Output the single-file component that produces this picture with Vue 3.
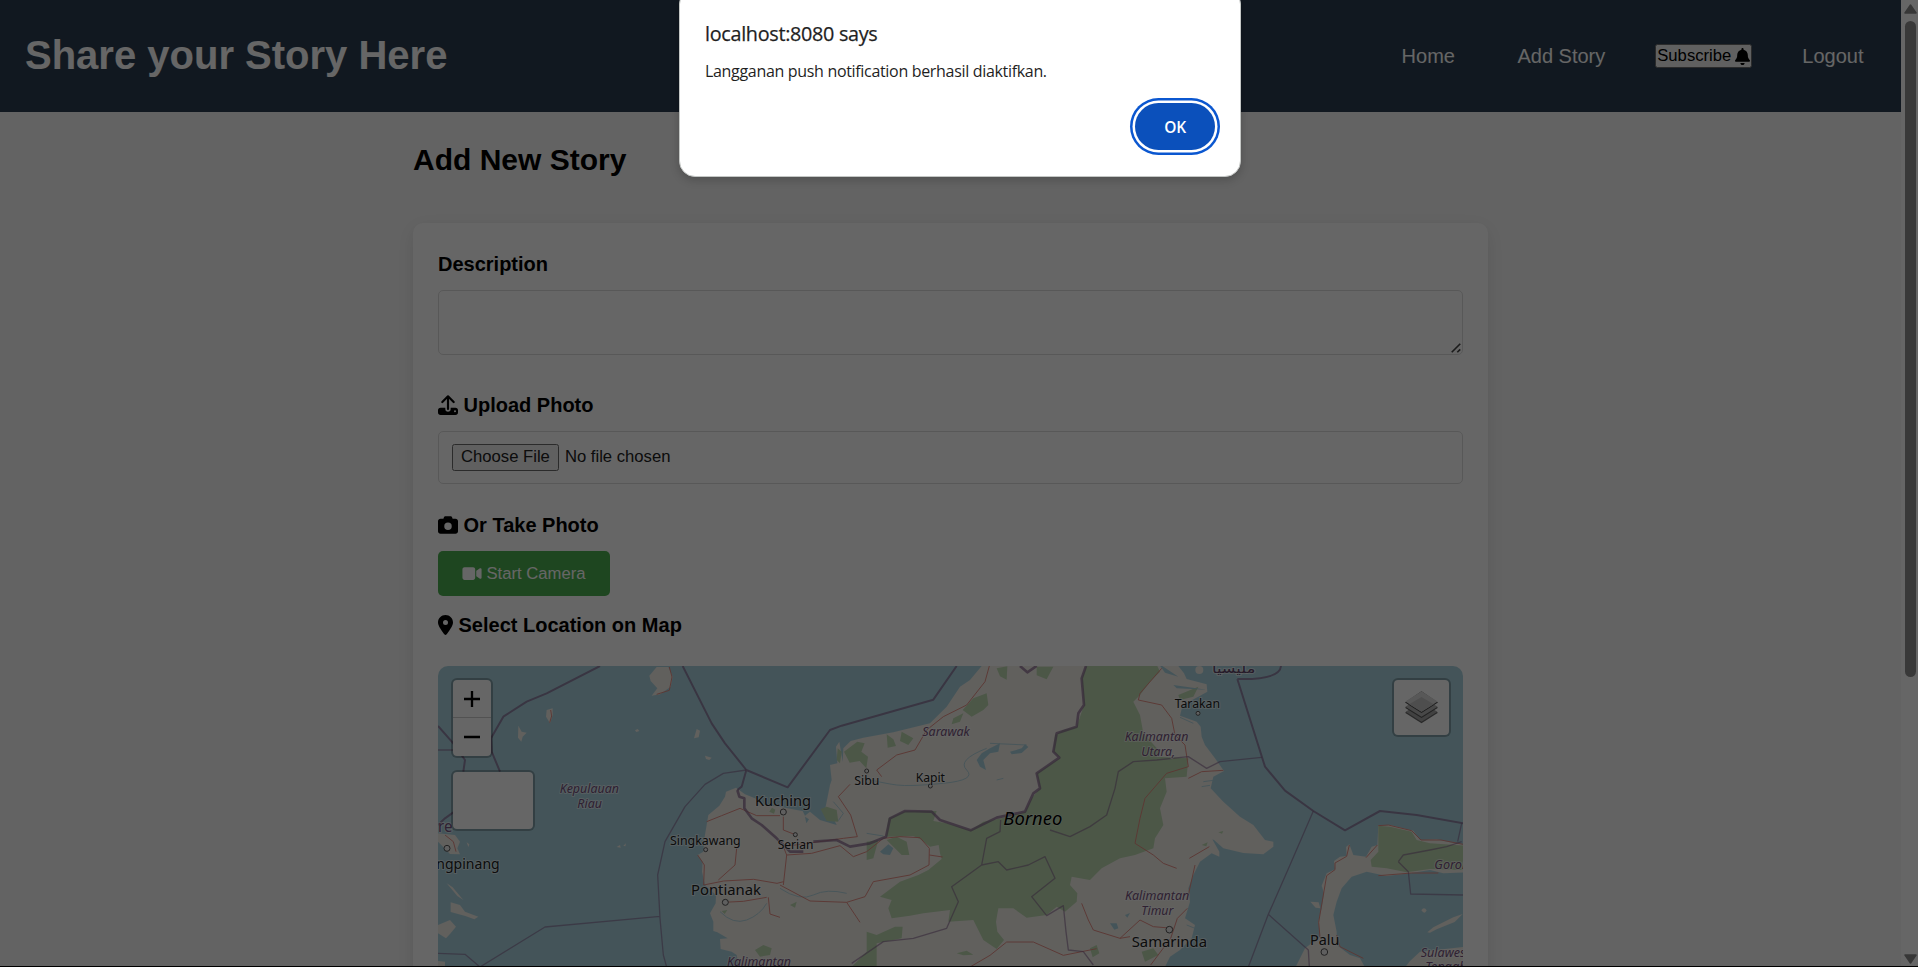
<script setup>
const towns = [
  { name: 'Singkawang', x: 720, y: 569, w: 212, size: 37, cx: 827, cy: 584, r: 6 },
  { name: 'Pontianak', x: 783, y: 721, w: 210, size: 44, cx: 886, cy: 742, r: 9 },
  { name: 'Kuching', x: 975, y: 452, w: 168, size: 44, cx: 1060, cy: 471, r: 9 },
  { name: 'Serian', x: 1043, y: 582, w: 107, size: 37, cx: 1096, cy: 539, r: 6 },
  { name: 'Sibu', x: 1273, y: 391, w: 75, size: 37, cx: 1310, cy: 348, r: 6 },
  { name: 'Kapit', x: 1457, y: 380, w: 88, size: 37, cx: 1501, cy: 393, r: 6 },
  { name: 'Tarakan', x: 2234, y: 159, w: 136, size: 37, cx: 2304, cy: 175, r: 6 },
  { name: 'Samarinda', x: 2105, y: 875, w: 226, size: 44, cx: 2218, cy: 824, r: 10 },
  { name: 'Palu', x: 2640, y: 871, w: 88, size: 44, cx: 2683, cy: 891, r: 10 },
  { name: 'ngpinang', x: 19, y: 642, w: 190, size: 44, cx: 51, cy: 580, r: 9 }
]
const regions = [
  { name: 'Kepulauan', x: 389, y: 413, w: 178 },
  { name: 'Riau', x: 442, y: 458, w: 74 },
  { name: 'Sarawak', x: 1477, y: 242, w: 142 },
  { name: 'Kalimantan', x: 2084, y: 257, w: 191 },
  { name: 'Utara,', x: 2134, y: 302, w: 101 },
  { name: 'Kalimantan', x: 2085, y: 736, w: 193 },
  { name: 'Timur', x: 2134, y: 780, w: 96 },
  { name: 'Kalimantan', x: 891, y: 932, w: 192 },
  { name: 'Gorontalo', x: 3013, y: 641, w: 170 },
  { name: 'Sulawesi', x: 2972, y: 906, w: 144 },
  { name: 'Tengah', x: 2986, y: 948, w: 124 }
]
</script>

<template>
  <div class="screen">
    <header class="topbar">
      <h1>Share your Story Here</h1>
      <nav>
        <a>Home</a>
        <a>Add Story</a>
        <button class="subscribe">Subscribe
          <svg viewBox="0 0 448 512"><path d="M224 0c-17.7 0-32 14.3-32 32V51.2C119 66 64 130.6 64 208v18.8c0 47-17.3 92.4-48.5 127.6l-7.4 8.3c-8.4 9.4-10.4 22.9-5.3 34.4S19.4 416 32 416H416c12.6 0 24-7.4 29.2-18.9s3.1-25-5.3-34.4l-7.4-8.3C401.3 319.2 384 273.9 384 226.8V208c0-77.4-55-142-128-156.8V32c0-17.7-14.3-32-32-32zm45.3 493.3c12-12 18.7-28.3 18.7-45.3H160c0 17 6.7 33.3 18.7 45.3s28.3 18.7 45.3 18.7s33.3-6.7 45.3-18.7z" /></svg>
        </button>
        <a>Logout</a>
      </nav>
    </header>

    <main>
      <h2>Add New Story</h2>
      <section class="card">
        <div class="label">Description</div>
        <div class="textarea">
          <svg viewBox="0 0 27 27"><path d="M2 25 25 2M17 25l8-8" fill="none" stroke="#444" stroke-width="4.5" /></svg>
        </div>

        <div class="label">
          <svg class="ic20" viewBox="0 0 60 60">
            <path d="M30 6V42M13 21 30 4 47 21" fill="none" stroke="#000" stroke-width="6.5" stroke-linecap="round" stroke-linejoin="round" />
            <path fill-rule="evenodd" d="M8 38H22V42a8 8 0 0 0 16 0V38H52a8 8 0 0 1 8 8V52a8 8 0 0 1-8 8H8a8 8 0 0 1-8-8V46a8 8 0 0 1 8-8ZM51 46a3 3 0 1 0 0 6a3 3 0 1 0 0-6Z" />
          </svg>
          Upload Photo
        </div>
        <div class="file"><span class="choose">Choose File</span><span>No file chosen</span></div>

        <div class="label">
          <svg class="ic20" viewBox="0 0 512 512"><path d="M149.1 64.8L138.7 96H64C28.7 96 0 124.7 0 160V416c0 35.3 28.7 64 64 64H448c35.3 0 64-28.7 64-64V160c0-35.3-28.7-64-64-64H373.3L362.9 64.8C356.4 45.2 338.1 32 317.4 32H194.6c-20.7 0-39 13.2-45.5 32.8zM256 192a96 96 0 1 1 0 192 96 96 0 1 1 0-192z" /></svg>
          Or Take Photo
        </div>
        <button class="camera">
          <svg viewBox="0 0 576 512"><path d="M0 128C0 92.7 28.7 64 64 64H320c35.3 0 64 28.7 64 64V384c0 35.3-28.7 64-64 64H64c-35.3 0-64-28.7-64-64V128zM559.1 99.8c10.4 5.6 16.9 16.4 16.9 28.2V384c0 11.8-6.5 22.6-16.9 28.2s-23 5-32.9-1.6l-96-64L416 337.1V174.9l14.2-9.5 96-64c9.8-6.5 22.4-7.2 32.9-1.6z" /></svg>
          Start Camera
        </button>

        <div class="label place">
          <svg class="pin" viewBox="0 0 384 512"><path d="M215.7 499.2C267 435 384 279.4 384 192C384 86 298 0 192 0S0 86 0 192c0 87.4 117 243 168.3 307.2c12.3 15.3 35.1 15.3 47.4 0zM192 128a64 64 0 1 1 0 128 64 64 0 1 1 0-128z" /></svg>
          Select Location on Map
        </div>

        <div class="map">
          <svg class="tiles" viewBox="24 33 3075 903" preserveAspectRatio="none">
            <!-- land masses -->
            <g class="land">
              <path d="M930 950 920 900 905 890 872 882 870 852 893 850 862 832 850 828 850 800 840 775 857 745 858 720 825 690 816 650 818 620 803 600 820 590 824 545 835 480 868 452 885 425 888 410 918 398 945 418 975 430 1000 450 1050 455 1100 465 1118 468 1125 482 1140 470 1170 495 1220 510 1205 480 1186 460 1200 390 1205 375 1200 330 1222 325 1218 275 1228 260 1238 320 1240 280 1262 258 1300 248 1390 232 1500 205 1550 155 1590 95 1620 75 1655 33H2245L2262 55 2270 72 2330 88 2332 110 2305 125 2258 150 2250 182 2300 200 2312 215 2315 245 2325 270 2355 310 2382 348 2350 365 2342 400 2380 440 2430 485 2470 510 2505 555 2530 560 2530 575 2500 598 2440 594 2380 580 2352 555 2347 553 2368 590 2368 605 2345 595 2310 620 2290 660 2275 700 2280 740 2265 790 2295 810 2285 850 2250 885 2220 905 2198 950Z" />
              <path d="M2590 950 2625 880 2670 845 2665 800 2675 760 2682 715 2675 692 2690 655 2715 643 2712 618 2730 605 2750 603 2748 576 2758 568 2770 600 2808 605 2825 575 2842 570 2845 512 2880 510 2950 527 2970 555 3020 553 3060 562 3105 570V652L3040 655 3000 645 2940 655 2870 663 2810 650 2765 665 2735 700 2720 740 2710 780 2720 830 2720 870 2760 900 2790 910 2812 950Z" />
              <path d="M2915 950 2940 918 2970 890 3105 875V950ZM2641 740l25 2 5 18-14-2ZM2974 766q8-12 16 0-6 14-16 0ZM2992 832l18-15 30-15 30-15 28-10-24 24-30 12-24 10-20 10Z" />
              <path d="M658 62 680 36 715 36 728 65 722 95 690 118 665 122 682 100 662 78ZM350 165 368 160 368 180 360 205 348 185ZM265 212l10 18 15 3-12 12-4 15-10-12ZM800 222l10 5-4 20-14 3ZM615 226l8-4 5 6-9 3ZM825 302l20 6-7 7-10-3ZM560 576l10-6 2 8ZM580 572l8-7-2 9ZM110 562l8 6-3 8Z" />
              <path d="M24 535 75 540 90 560 82 580 90 598 60 597 24 560ZM50 685l18 12 32 38-18-12ZM62 742l28 8 15 20 40 15-12 8-27-10-44-12ZM24 810 60 795 78 815 62 835 48 850 24 835ZM24 918 45 920 45 950H24Z" />
              <circle cx="2308" cy="45" r="12" />
            </g>
            <!-- forest cover -->
            <g class="forest">
              <path d="M1968 33 1955 70 1962 150 1940 215 1900 225 1875 240 1870 290 1890 308 1820 355 1830 400 1805 430 1785 470 1715 490 1660 500 1622 526 1550 505 1510 498 1520 468 1425 468 1375 490 1368 545 1450 543 1470 552 1500 575 1526 570 1530 595 1535 612 1495 645 1465 660 1410 680 1350 725 1385 735 1375 760 1385 790 1440 782 1480 775 1560 765 1555 800 1630 795 1660 855 1700 882 1722 855 1702 830 1698 800 1705 760 1750 760 1790 788 1850 780 1880 755 1905 770 1940 740 1942 715 1920 690 1925 665 1980 675 2015 640 2070 610 2115 600 2170 580 2175 550 2200 510 2190 460 2210 410 2205 370 2270 365 2275 310 2180 305 2190 290 2140 235 2130 180 2110 140 2130 120 2160 80 2190 50 2182 33Z" />
              <path d="M2845 512 2880 515 2945 530 2960 555 3000 565 3105 572V645L3000 642 2930 652 2870 640 2825 635 2822 615 2845 590Z" />
              <path d="M1598 165 1630 130 1670 115 1675 150 1660 165 1625 185ZM1570 190l30-15-10 25-25 8ZM1370 238l20 15 8 20-25 5ZM1415 230l35 20-15 20-25-12ZM1242 290l40-30 22 5-10 25 20 15-5 35-20-22-30 5ZM1223 280l12 10-5 35-10-10ZM1700 40l32-6-2 40-20-10ZM1820 35h50l-20 38-30-12ZM1172 462 1190 455 1220 465 1225 500 1190 498ZM1310 560 1345 555 1330 610 1310 615ZM1370 555 1400 545 1430 560 1438 600 1415 600 1385 570ZM1310 830 1340 840 1395 815 1418 815 1415 850 1340 865 1340 936H1265L1310 890ZM975 885 1000 870 1025 880 1020 900 990 905ZM1580 895l30-8 20 12-30 2ZM1980 880l20-10 8 25-20 12ZM2245 120l60-25-15 30-40 10ZM2315 570l18-8-4 12ZM2365 532l15-4-4 8ZM2135 890l35-10 15 20-40 20ZM1018 470l8-12 10 6-4 12ZM875 768l17-3-8 12ZM1080 750l20-10-5 18Z" />
            </g>
            <!-- lakes and rivers -->
            <g class="lake">
              <path d="M1640 315 1655 295 1680 280 1710 265 1705 290 1680 295 1660 315 1668 345 1650 335ZM1740 290l35-10 10-12 10 8-20 18-30 4ZM1350 590l25-22 15 12-10 20-20-2ZM2040 805l20 0 5 15-12 4ZM2085 780l15-6-8 14ZM2185 25l60 40-40-12ZM2230 90l100 14-90-4ZM1125 485l12 8-8 12Z" />
              <path class="river" d="M1280 365q80 20 120 25t140-5 70-40 60-65M1050 700q60 40 100 20t100-5M870 770q40 40 80 25t60-50M1210 440l30 35-15 22M1310 535l50 8M1700 375l20-5M2290 205l-40-18M2320 380l30-4M2315 395l25-4M2270 810l30 12M1680 265l110 5" />
            </g>
            <!-- roads -->
            <path class="road" d="M1678 33 1665 80 1610 150 1540 185 1490 225 1455 285 1400 300 1340 345 1355 365M1260 388 1225 425 1262 480 1282 545 1240 550 1060 575 1070 600 1145 595 1230 572 1270 605 1310 590 1360 550 1410 545 1470 548 1498 580 1497 630 1440 660 1330 680 1305 725 1250 742 1140 738 1050 690M1498 600l40 6M1070 600 1060 690M1250 742l40 60M1060 485v40l36 14M830 500l45-18 55-22 50 22 70 0M803 600l20 30-2 60 60-12 90-5 70 12 20-5M880 742l60-3 70-12M920 580l-5 50-50 45M1015 727l5 50 30 10M1620 936l60-35 50-40 80 0 90 40 100-20M1955 745l20 50 15 30 80 25 30-5M2195 40l-65 75-5 20 70 15 30 40 10 50 30 30 10 65-65 20-65 75-15 60-15 75 55 35 30 25 40 15M2275 370l40-20 65-4M2278 610l60-35M2275 720l20-90M2272 760l-30 30-20 60-60 80M2070 850l60-55 40 20 60 5M718 36l8 30-8 40-38 12M362 165l3 18-6 20M2845 512l30-2 70 17 28 28 60 0 72 14M2808 608l34-38M2845 662l100-8 80 0M2758 570l-8 34-35 20 0 20-25 18-12 70-12 70 4 45M2720 840l10 35 70 35M45 540l25 20 8 30" />
            <!-- province outlines -->
            <path class="province" d="M1265 925 1360 860 1450 850 1550 820 1585 740 1565 695 1655 630 1670 550 1710 530 1712 495M1655 630 1705 620 1730 645 1795 630 1845 605 1875 670 1805 725 1850 782 1900 752 1908 830 1915 885 1960 890 1990 930M1860 525 1920 545 1980 515 2030 480 2055 400 2065 350 2110 320 2180 315 2275 305 2330 340 2370 320 2495 307M949 345 880 355 825 388 765 455 705 560 683 660 690 790 700 900 710 936M690 784 345 816 150 936 105 898 24 895M2650 468 2580 630 2515 778 2455 936M2515 778 2635 885 2638 936M2905 620 2920 600 3000 585 3050 575 3095 560M2905 620 2935 650 2942 717 3100 720M3095 505l-12 55M24 285h45" />
            <!-- national borders -->
            <path class="border sea" d="M24 213 70 265 105 315 100 350M510 33 350 115 290 140 220 185 183 250 185 290 210 350M758 33 845 205 885 265 949 345 1073 397 1200 225 1235 212 1510 134 1580 33M949 345 935 395 922 405M2422 72 2505 335 2565 407 2650 468 2745 526 2850 468 2960 480 3100 505M2422 72Q2550 75 2553 33M24 510 45 490 70 472" />
            <path class="border" d="M922 405 928 425 943 430 943 460 965 490 995 510 1040 550 1080 590 1120 590M1150 560 1220 555 1260 575 1320 565 1368 545 1380 490 1425 468 1505 470 1530 495 1622 526 1700 488 1785 470 1810 415 1830 400 1820 355 1888 308 1870 290 1880 235 1940 215 1945 175 1962 150 1955 70 1968 33M1770 33 1792 52 1820 33" />
            <!-- labels -->
            <g class="region">
              <text v-for="(r, i) in regions" :key="i" :x="r.x" :y="r.y" :textLength="r.w" lengthAdjust="spacingAndGlyphs">{{ r.name }}</text>
              <text class="cut" x="24" y="532" textLength="43" lengthAdjust="spacingAndGlyphs">re</text>
            </g>
            <text class="arabic" x="2346" y="55" textLength="130" lengthAdjust="spacingAndGlyphs" direction="ltr">مليسيا</text>
            <g class="town">
              <template v-for="t in towns" :key="t.name">
                <circle :cx="t.cx" :cy="t.cy" :r="t.r" />
                <text :x="t.x" :y="t.y" :font-size="t.size" :textLength="t.w" lengthAdjust="spacingAndGlyphs">{{ t.name }}</text>
              </template>
            </g>
            <text class="island" x="1720" y="511" textLength="177" lengthAdjust="spacingAndGlyphs">Borneo</text>
          </svg>
          <div class="controls">
            <div class="zoom">
              <span><svg viewBox="0 0 48 48"><path d="M0 24H48M24 0V48" stroke="#000" stroke-width="7" /></svg></span>
              <span><svg viewBox="0 0 48 48"><path d="M0 24H48" stroke="#000" stroke-width="7" /></svg></span>
            </div>
            <div class="blank"></div>
          </div>
          <div class="layers">
            <svg viewBox="0 0 100 98">
              <path d="M0 65 50 36 100 65 50 97Z" fill="#666" />
              <path d="M2 62 50 92 98 62 50 32Z" fill="#a4a4a4" />
              <path d="M0 50 50 20 100 50 50 81Z" fill="#555" />
              <path d="M1 47 50 77 99 47 50 16Z" fill="#b4b4b4" />
              <path d="M0 34 50 0 100 34 50 66Z" fill="#484848" />
              <path d="M1 31 50 0 99 31 50 62Z" fill="#dcdcdc" />
              <path d="M13 39 50 17 87 39 50 62Z" fill="#c2c2c2" />
            </svg>
          </div>
        </div>
      </section>
    </main>

    <div class="scrollbar">
      <svg viewBox="0 0 13 10"><path d="M6.5 1 12 9H1Z" /></svg>
      <div class="thumb"></div>
      <svg class="down" viewBox="0 0 13 10"><path d="M6.5 9 12 1H1Z" /></svg>
    </div>

    <div class="scrim"></div>

    <div class="dialog">
      <div class="origin">localhost:8080 says</div>
      <div class="message">Langganan push notification berhasil diaktifkan.</div>
      <button class="ok">OK</button>
    </div>
  </div>
</template>

<style>
body { margin: 0; overflow: hidden; background: #000; }
</style>

<style scoped>
* { box-sizing: border-box; }
.screen { position: relative; width: 1918px; height: 967px; overflow: hidden; background: #f8f8f8; border-bottom: 1px solid #000; font-family: "Liberation Sans", Arial, sans-serif; color: #000; }
svg { display: block; flex: none; }
button { font-family: inherit; margin: 0; }
.topbar { width: 1901px; height: 112px; padding: 0 25px 2px; display: flex; align-items: center; justify-content: space-between; background: #2c3e50; color: #fff; }
h1 { margin: 0; font-size: 40px; line-height: 46px; }
nav { display: flex; align-items: center; gap: 37.5px; padding-top: 2px; font-size: 20px; line-height: 24px; }
nav a { padding: 0 12.5px 1px; }
.subscribe { display: flex; align-items: center; gap: 4px; height: 24px; padding: 0 1px; border: 1px solid #6b6b6b; border-radius: 2.5px; background: #efefef; color: #000; font-size: 16.67px; line-height: 20px; }
.subscribe svg { width: 15px; height: 17px; }
main { width: 1075px; margin-left: 413px; padding-top: 31px; }
h2 { margin: 0 0 46px; font-size: 30px; line-height: 34px; }
.card { height: 900px; padding: 25px; border-radius: 10px; background: #fff; box-shadow: 0 5px 19px rgba(0, 0, 0, .1); }
.label { display: flex; align-items: center; gap: 5.5px; height: 32px; margin-bottom: 10px; font-size: 20px; font-weight: bold; line-height: 32px; }
.ic20 { width: 20px; height: 20px; }
.pin { width: 15px; height: 20px; }
.textarea, .file { border: 1px solid #ddd; border-radius: 5px; display: flex; }
.textarea { height: 65px; margin-bottom: 34px; align-items: flex-end; justify-content: flex-end; padding: 1px; }
.textarea svg { width: 10px; height: 10px; }
.file { height: 53px; margin-bottom: 25px; padding: 0 13px 1px; align-items: center; gap: 6px; font-size: 16.67px; color: #222; }
.choose { height: 27px; padding: 0 8px; border: 1px solid #6b6b6b; border-radius: 2.5px; background: #efefef; line-height: 24px; }
.camera { display: flex; align-items: center; justify-content: center; gap: 4px; width: 172px; height: 45px; margin-bottom: 13px; padding: 0; border: 0; border-radius: 5px; background: #4caf50; color: #fff; font-size: 16.67px; }
.camera svg { width: 20px; height: 17px; fill: #fff; }
.place { margin-bottom: 25px; }
.map { position: relative; width: 1025px; height: 500px; overflow: hidden; border-radius: 10px; background: #aad3df; }
.tiles { width: 1025px; height: 301px; }
.land { fill: #f2efe9; }
.forest { fill: #bddab1; }
.lake { fill: #aad3df; }
.river { fill: none; stroke: #aad3df; stroke-width: 2.5; }
.road { fill: none; stroke: #e58a80; stroke-width: 2.8; stroke-linejoin: round; }
.province { fill: none; stroke: #876690; stroke-opacity: .6; stroke-width: 4; stroke-linejoin: round; }
.border { fill: none; stroke: #85648c; stroke-opacity: .7; stroke-width: 8; stroke-linejoin: round; }
.sea { stroke-width: 6; }
.tiles text { font-family: "Noto Sans", sans-serif; paint-order: stroke; stroke: rgba(255, 255, 255, .55); stroke-width: 6px; stroke-linejoin: round; }
.region text { font-size: 38px; font-style: italic; fill: #75527d; }
.region .cut { font-size: 46px; font-style: normal; }
.tiles .arabic { font-family: "DejaVu Sans", sans-serif; font-size: 40px; fill: #604468; }
.town text { fill: #222; }
.town circle { fill: #eee; stroke: #555; stroke-width: 3; }
.tiles .island { font-size: 53px; font-style: italic; fill: #000; stroke-width: 3px; }
.controls { position: absolute; left: 13px; top: 12px; display: grid; gap: 12px; }
.zoom, .blank, .layers { border: 2.5px solid rgba(0, 0, 0, .25); background: #fff; background-clip: padding-box; border-radius: 6px; }
.zoom { width: 42px; height: 80px; display: grid; grid-template-rows: 38px 38px; }
.zoom span { display: flex; align-items: center; justify-content: center; }
.zoom span:first-child { border-bottom: 1px solid #ccc; }
.zoom svg { width: 16px; height: 16px; }
.blank { width: 84px; height: 61px; }
.layers { position: absolute; right: 12px; top: 12px; width: 59px; height: 59px; display: flex; align-items: center; justify-content: center; }
.layers svg { width: 33px; height: 33px; }
.scrollbar { position: absolute; right: 0; top: 0; width: 17px; height: 966px; padding: 4px 0 2px 1px; display: flex; flex-direction: column; align-items: center; background: #fff; }
.scrollbar svg { width: 13px; height: 10px; fill: #8b8b8b; stroke: #8b8b8b; stroke-width: 1.5; stroke-linejoin: round; }
.thumb { width: 11px; height: 656px; margin-top: 7px; border-radius: 6px; background: #8f8f8f; }
.scrollbar .down { margin-top: auto; }
.scrim { position: absolute; inset: 0; background: rgba(0, 0, 0, .6); }
.dialog { position: absolute; left: 679px; top: -12px; width: 562px; height: 189px; padding: 31px 25px 0 25px; border: 1px solid #c4c7c5; border-radius: 16px; background: #fff; box-shadow: 0 3px 10px rgba(0, 0, 0, .2); color: #1f1f1f; font-family: "Open Sans", "Noto Sans", sans-serif; display: flex; flex-direction: column; }
.origin { height: 28px; font-size: 19.8px; line-height: 28px; font-weight: 500; letter-spacing: -.3px; -webkit-text-stroke: .25px #1f1f1f; white-space: nowrap; }
.message { height: 24px; margin-top: 11px; font-size: 16px; line-height: 24px; letter-spacing: -.32px; white-space: nowrap; }
.ok { align-self: flex-end; width: 80px; height: 47px; margin-top: 20px; padding: 0; border: 0; border-radius: 24px; background: #0b50bb; color: #fff; font-size: 15.5px; font-weight: 600; letter-spacing: -.3px; box-shadow: 0 0 0 2.5px #fff, 0 0 0 5px #0b57d0; }
</style>
